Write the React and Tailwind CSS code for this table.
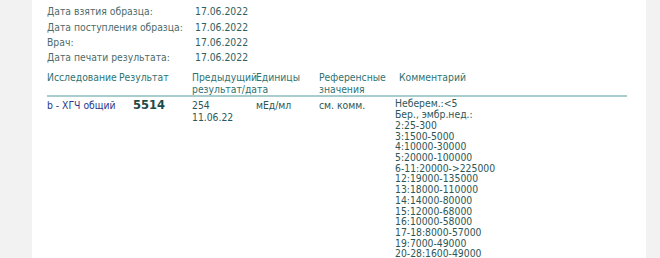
import React from 'react';

const info = [
  ['ИНЗ:', '000000.00'],
  ['Дата взятия образца:', '17.06.2022'],
  ['Дата поступления образца:', '17.06.2022'],
  ['Врач:', '17.06.2022'],
  ['Дата печати результата:', '17.06.2022'],
];

const comment = [
  'Неберем.:<5',
  'Бер., эмбр.нед.:',
  '2:25-300',
  '3:1500-5000',
  '4:10000-30000',
  '5:20000-100000',
  '6-11:20000->225000',
  '12:19000-135000',
  '13:18000-110000',
  '14:14000-80000',
  '15:12000-68000',
  '16:10000-58000',
  '17-18:8000-57000',
  '19:7000-49000',
  '20-28:1600-49000',
];

const App = () => {
  return (
    <div className="flex h-screen w-full overflow-hidden bg-[#f2f2f2] pl-[32px] pr-[14px]" style={{ fontFamily: '"DejaVu Sans Condensed", "DejaVu Sans", sans-serif' }}>
      <div className="flex flex-1 flex-col overflow-hidden bg-white pl-[15px] text-[10.3px]">
        <div className="-mt-[11px] leading-[15.3px]">
          {info.map(([label, value]) => (
            <div key={label} className="flex">
              <div className="w-[148px] text-[#4d6b6b]">{label}</div>
              <div className="text-[#2f5f5f]">{value}</div>
            </div>
          ))}
        </div>

        <table className="mt-[6px] w-[580px] shrink-0 table-fixed text-left whitespace-nowrap">
          <thead className="text-[#2e7272] leading-[12px]">
            <tr className="border-b-2 border-[#a9cdcd] align-top">
              <th className="w-[72px] font-normal pb-[1px]">Исследование</th>
              <th className="w-[73px] font-normal">Результат</th>
              <th className="w-[64px] font-normal">Предыдущий<br />результат/дата</th>
              <th className="w-[63px] font-normal">Единицы</th>
              <th className="w-[76px] font-normal">Референсные<br />значения</th>
              <th className="font-normal pl-[4px]">Комментарий</th>
            </tr>
          </thead>
          <tbody className="align-top text-[#2d5656]">
            <tr>
              <td className="pt-[2px] leading-[12px] text-[#25388c]">b - ХГЧ общий</td>
              <td className="pt-[2px] pl-[14px] leading-[12px] font-bold text-[#1f4a4a] text-[11.5px] font-['DejaVu_Sans',sans-serif]">5514</td>
              <td className="pt-[2px] leading-[12px]">254<br />11.06.22</td>
              <td className="pt-[2px] leading-[12px]">мЕд/мл</td>
              <td className="pt-[2px] leading-[12px]">см. комм.</td>
              <td className="pt-[1px] leading-[10.7px]">
                {comment.map((line) => (
                  <div key={line}>{line}</div>
                ))}
              </td>
            </tr>
          </tbody>
        </table>
      </div>
    </div>
  );
};

export default App;
